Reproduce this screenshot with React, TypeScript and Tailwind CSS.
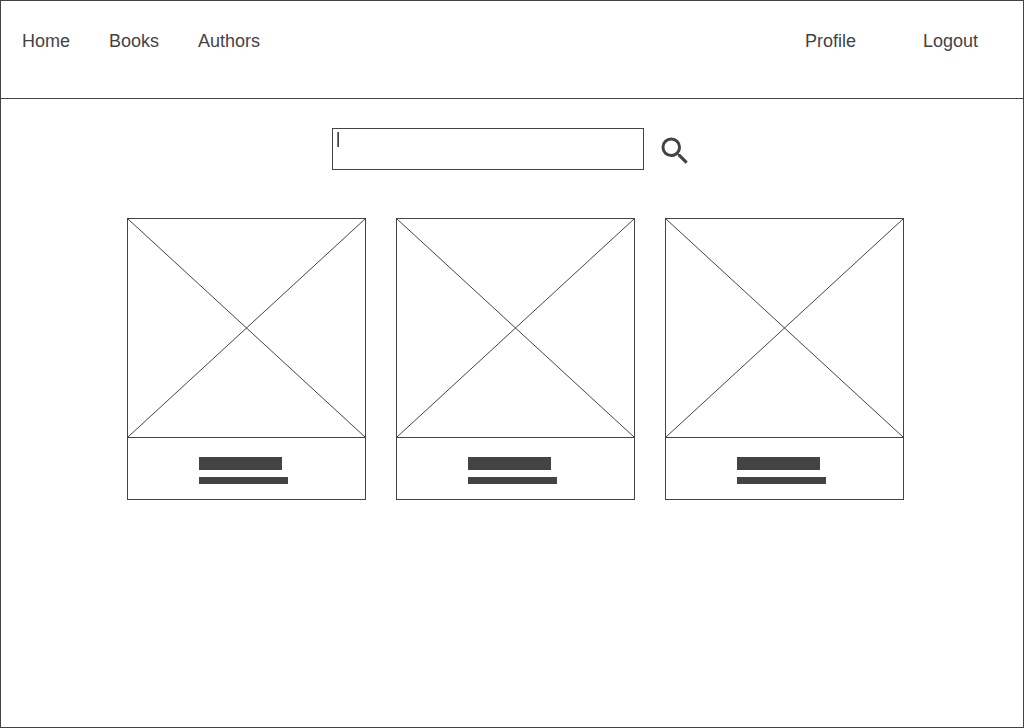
const links = ["Home", "Books", "Authors"];
const accountLinks = ["Profile", "Logout"];
const books = [1, 2, 3];

function SearchIcon() {
  return (
    <svg viewBox="0 0 24 24" className="size-9 fill-current" aria-hidden="true">
      <path d="M15.5 14h-.79l-.28-.27A6.47 6.47 0 0 0 16 9.5 6.5 6.5 0 1 0 9.5 16c1.61 0 3.09-.59 4.23-1.57l.27.28v.79l5 4.99L20.49 19l-4.99-5zm-6 0C7.01 14 5 11.99 5 9.5S7.01 5 9.5 5 14 7.01 14 9.5 11.99 14 9.5 14z" />
    </svg>
  );
}

function BookCard() {
  return (
    <article className="w-[239px] border border-[#434343]">
      <svg
        viewBox="0 0 237 218"
        preserveAspectRatio="none"
        className="block h-[218px] w-full stroke-[#434343]"
        aria-hidden="true"
      >
        <path d="M0 0L237 218M237 0L0 218" fill="none" strokeWidth="1" />
      </svg>
      <div className="flex h-[62px] flex-col items-start gap-[7px] border-t border-[#434343] pt-[19px] pl-[71px]">
        <div className="h-[13px] w-[83px] bg-[#434343]" />
        <div className="h-[7px] w-[89px] bg-[#434343]" />
      </div>
    </article>
  );
}

export default function App() {
  return (
    <div className="flex min-h-screen flex-col border border-[#434343] bg-white font-['Liberation_Sans',Arial,sans-serif] text-[#434343]">
      <header className="border-b border-[#434343] pt-[30px] pr-[45px] pb-[47px] pl-[21px] text-[18px] leading-5">
        <nav className="flex justify-between">
          <div className="flex gap-[39px]">
            {links.map((label) => (
              <a key={label} href="#">
                {label}
              </a>
            ))}
          </div>
          <div className="flex gap-[67px]">
            {accountLinks.map((label) => (
              <a key={label} href="#">
                {label}
              </a>
            ))}
          </div>
        </nav>
      </header>
      <main>
        <form
          className="flex items-end justify-center gap-[13px] pt-[29px] pl-px"
          onSubmit={(event) => event.preventDefault()}
        >
          <div className="relative flex">
            <input
              type="text"
              aria-label="Search books"
              className="peer h-[42px] w-[312px] border border-[#434343] px-1 pb-5 text-[16px] outline-none"
            />
            {/* Resting caret, hidden once the field takes focus */}
            <span
              aria-hidden="true"
              className="pointer-events-none absolute top-1 left-[5px] h-[15px] w-0.5 border-l border-[#777777] bg-[#434343] peer-focus:hidden"
            />
          </div>
          <button type="submit" aria-label="Search" className="pb-px">
            <SearchIcon />
          </button>
        </form>
        <section
          aria-label="Books"
          className="flex flex-wrap justify-center gap-[30px] pt-12 pl-[7px]"
        >
          {books.map((id) => (
            <BookCard key={id} />
          ))}
        </section>
      </main>
    </div>
  );
}
